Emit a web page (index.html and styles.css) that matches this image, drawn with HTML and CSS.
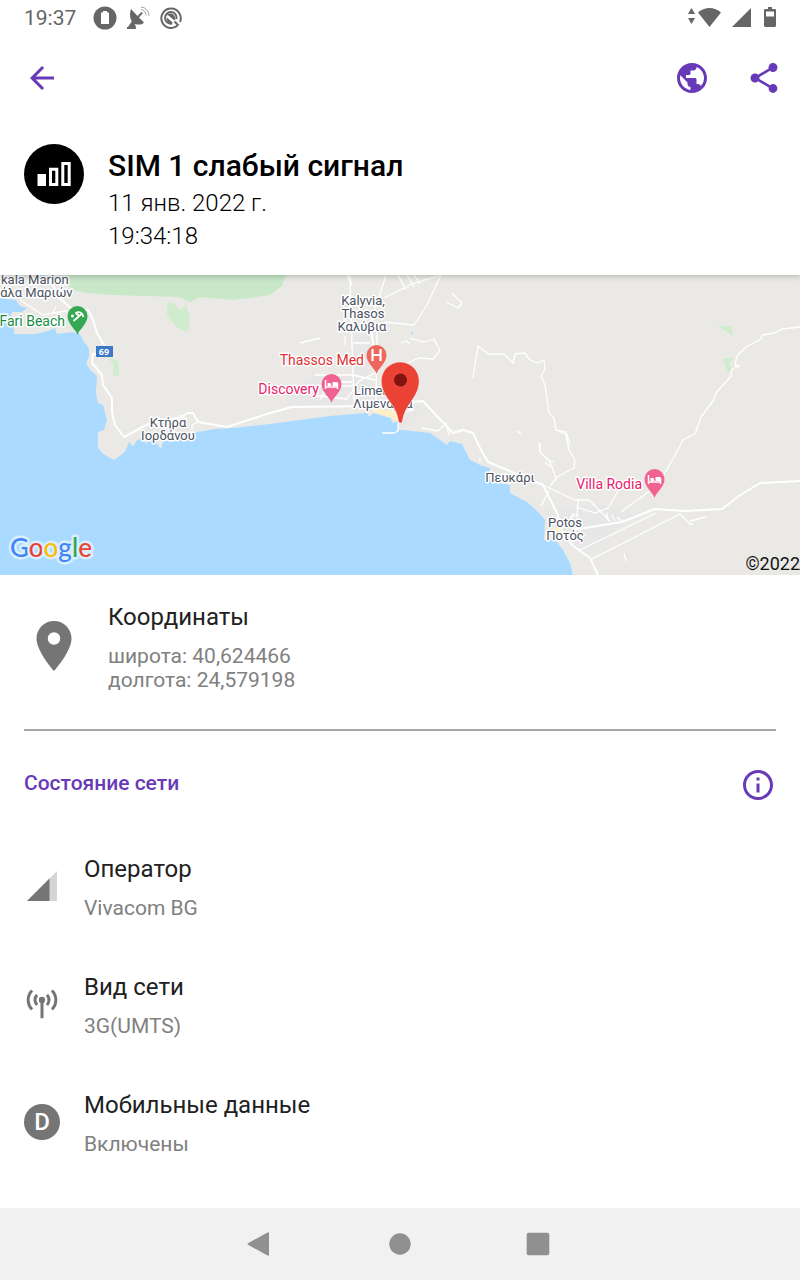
FILE: index.html
```html
<!DOCTYPE html>
<html lang="ru">
<head>
<meta charset="utf-8">
<meta name="viewport" content="width=device-width, initial-scale=1">
<title>SIM 1 слабый сигнал</title>
<link rel="stylesheet" href="styles.css">
</head>
<body>
<div class="status-bar">
  <time class="clock">19:37</time>
  <svg class="status-icon" viewBox="0 0 24 24"><path fill-rule="evenodd" d="M12 .5a11.5 11.5 0 1 0 0 23 11.5 11.5 0 0 0 0-23zM10 5h4v1.500h2V18H8V6.500h2z"/></svg>
  <svg class="status-icon" viewBox="0 0 24 24"><path d="M5 3C3 8 4 16 9 18c3 1 7 1 9-1.500l-5-5 4-4.500-1.500-1-4 4zM6 15l-4 6H1v2h9c0-3-1-5-2-6z"/><path class="thin" d="M15 3.500a6 6 0 0 1 5 6M15 1a8.500 8.500 0 0 1 8 9"/></svg>
  <svg class="status-icon" viewBox="0 0 24 24"><path class="ring" d="M18.500 19.500A9.700 9.700 0 1 1 21 16"/><path class="ring" d="M13 17.500A5.800 5.800 0 1 1 17.500 13"/><path d="M8 9c3-3 8-1 8.500 4l-1 1.500-6-5zM8 11.500l6 5.500c-4 1-7-2-6-5.500z"/><path class="ring" d="M15.500 15.500l4 4"/></svg>
  <span class="spacer"></span>
  <svg class="wifi" viewBox="0 0 34 24"><path d="M1 8l3.500-6L8 8zM1 12l3.500 6L8 12zM11 6.500c6.500-6 16.500-6 23 0L22.500 21z"/></svg>
  <svg class="status-icon" viewBox="0 0 24 24"><path d="M2 21L21 2v19z"/></svg>
  <svg class="battery" viewBox="0 0 14 24"><path fill-rule="evenodd" d="M5 1h4v2h3.500L13 4v16l-1 1H2l-1-1V4l.5-1H5zM3 5.500v5h8v-5z"/></svg>
</div>

<header class="header">
  <nav class="toolbar">
    <button class="icon-button" aria-label="Назад"><svg class="icon" viewBox="0 0 24 24"><path d="M20 11H7.830l5.590-5.590L12 4l-8 8 8 8 1.410-1.410L7.830 13H20v-2z"/></svg></button>
    <span class="spacer"></span>
    <button class="icon-button" aria-label="Открыть в браузере"><svg class="icon" viewBox="0 0 24 24"><path d="M12 2C6.480 2 2 6.480 2 12s4.480 10 10 10 10-4.480 10-10S17.520 2 12 2zm-1 17.930c-3.950-.49-7-3.850-7-7.930 0-.62.08-1.210.21-1.790L9 15v1c0 1.100.9 2 2 2v1.930zm6.900-2.540c-.26-.81-1-1.390-1.900-1.390h-1v-3c0-.55-.45-1-1-1H8v-2h2c.55 0 1-.45 1-1V7h2c1.100 0 2-.9 2-2v-.41c2.930 1.190 5 4.060 5 7.410 0 2.080-.8 3.970-2.100 5.390z"/></svg></button>
    <button class="icon-button" aria-label="Поделиться"><svg class="icon" viewBox="0 0 24 24"><path d="M18 16.080c-.76 0-1.440.3-1.960.77L8.910 12.700c.05-.23.09-.46.09-.7s-.04-.47-.09-.7l7.050-4.110c.54.5 1.250.81 2.040.81 1.660 0 3-1.340 3-3s-1.340-3-3-3-3 1.340-3 3c0 .24.04.47.09.7L8.040 9.810C7.500 9.310 6.790 9 6 9c-1.660 0-3 1.340-3 3s1.340 3 3 3c.79 0 1.500-.31 2.040-.81l7.120 4.160c-.05.21-.08.43-.08.65 0 1.610 1.310 2.920 2.920 2.920 1.610 0 2.920-1.310 2.920-2.920s-1.310-2.920-2.920-2.920z"/></svg></button>
  </nav>
  <div class="event">
    <svg class="event-icon" viewBox="0 0 60 60"><circle cx="30" cy="30" r="30"/><path fill="#fff" d="M13.500 30H22v12h-8.500z"/><path fill="none" stroke="#fff" stroke-width="3" d="M26.500 25.300h6.300v15.200h-6.300zM38.800 19.500h6.400v21h-6.400z"/></svg>
    <div>
      <h1 class="event-title">SIM 1 слабый сигнал</h1>
      <p class="event-date">11 янв. 2022 г.<br>19:34:18</p>
    </div>
  </div>
</header>

<main class="content">
  <svg class="map" viewBox="0 275 800 300" preserveAspectRatio="xMidYMid slice" role="img" aria-label="Карта">
    <path fill="#c8e8c8" d="M62 275L72 290 87 293 113 295 180 297 190 302 200 297 233 300 270 295 282 286 286 275z"/>
    <path fill="#cfeccd" d="M167 303l5-1 9 9 5-7 4 14-2 14-10-4-11-12zM108 357l10 4 1 15-6-1 1-9zM718 326h13l2 10zM723 359l11-2-5 7 3 5-4 3z"/>
    <path fill="#e7e7e8" d="M353 334h17v72h-17zM315 375h38v30h-65l-2-8zM545 508l60-3 30 10-50 40-25-15zM404 405h15l-5 18-14 6z"/>
    <path fill="#aadaff" d="M0 298L16 300 20 306 27 308 22 312 12 312 10 318 14 324 14 334 36 334 48 331 55 328 57 334 72 332 80 334 84 342 89 348 89 357 86 363 90 370 97 376 96 393 98 403 103 405 107 420 104 430 98 432 98 448 103 454 114 460 125 452 129 442 133 447 137 440 142 438 146 444 150 436 155 441 161 449 163 440 172 442 178 436 185 440 192 433 215 429 233 428 270 424 330 416 367 413 369 417 373 413 390 418 393 423 398 421 398 430 403 430 430 433 447 445 450 441 462 444 470 460 480 465 490 468 488 478 493 482 510 485 510 493 527 502 538 512 545 520 544 540 555 540 563 550 570 563 573 575 0 575zM34 275h10l6 9-8 2zM410 334l3-3-1 4z"/>
    <path fill="#fff0c5" d="M373 408l20 3 6 7-1 4-7-5-18-5zM553 527l8 1 1 5-8-2z"/>
    <g class="road">
      <path d="M20 300L43 315 53 313 67 311M53 313l3-6M300 343l20-5M345 336v9M350 275l2 70 2 57M386 275l-7 22-9 28M384 298l28-14 29-9M398 275l8 15M407 275l7 12M414 275l6 9M441 275l-14 30-13 20-30-3M446 302l12 6 4-5-10-10M353 343h17M377 325l-1 80M353 375l22 5M315 375h38M319 386h34M312 395l35 4 12-18 18-9M320 400l10-18h22M401 343l5-2 4 3M410 338l14 4 10-3 6 12-7 8-14-1-19 8"/>
      <path d="M473 378l3-20 2-12 10 8 16 0 9 9 2-9 10-1 5 7 8 3 6-3 1 9-4 7 4 9 4 28 5 5 2 12 10 2 4 12M539 443l1 9 11 10 3-1M545 462l5 5M557 430l9 5 3 15 6 10-1 8-17 9-7 9M540 443l0 9 10 10 6 16M800 327l-18 2-7 4-13 2-1 4-15 8-9 9-2 9 5 1-8 3-1 7-15 17-3 8-12 16-6 17-12 6-8 15-17 30-37 27M620 488l-12 20-13 5-19-6M543 485l32 15h14l12 12 10 10M541 506l8-15M578 500l-1 18M570 518l8-4M580 550l76-37M592 559l88-45 10 10 3 0M690 521l16-4M607 513l1 8M612 515l3 6M617 517l5 4M624 553l2 8M570 519l4-6"/>
      <path d="M521 434l-4-3M422 428l16 3 8-8 3 12M398 422v9l-4 2h-12M399 412l15-2M180 415l7 4M198 422l-6 3v5M480 458v4"/>
    </g>
    <g class="road main-road">
      <path d="M49 275L58 297 72 309 88 310 92 317 97 333 105 347 104 353 93 354 92 363 102 375 103 385 112 398 112 413 115 425 124 437 150 423 182 417 187 413 193 413 198 422 227 427 270 413 292 407 370 406 423 401 433 412 453 433 463 430 473 433 480 448 488 462 543 485 557 513 563 533 572 545 590 558 598 575"/>
      <path d="M347 275l5 10M370 325l4 24M572 530l50-8 33-13 30 2 37-2 17-13 21-13 40-2"/>
    </g>
    <g class="labels">
      <text x="1" y="284">kala Marion</text><text x="-7" y="297">κάλα Μαριών</text>
      <g text-anchor="middle"><text x="363" y="305">Kalyvia,</text><text x="363" y="318">Thasos</text><text x="362" y="331">Καλύβια</text>
      <text x="168" y="427">Κτήρα</text><text x="168" y="440">Ιορδάνου</text><text x="510" y="482">Πευκάρι</text><text x="565" y="527">Potos</text><text x="565" y="540">Ποτός</text></g>
      <text x="354" y="395">Limenaria</text><text x="353" y="408">Λιμενάρια</text>
      <g class="poi" text-anchor="end"><text fill="#188e45" x="65" y="326">Fari Beach</text><text fill="#e02f32" x="364" y="365">Thassos Med</text><text fill="#e9216c" x="319" y="394">Discovery</text><text fill="#e9216c" x="642" y="489">Villa Rodia</text></g>
    </g>
    <rect x="96" y="346" width="17" height="11" fill="#3a78c8"/><text class="shield" x="104" y="355" text-anchor="middle">69</text>
    <defs><path id="pin" d="M0 0C-1-5-10-11-10-19a10 10 0 1 1 20 0C10-11 1-5 0 0z"/><path id="bed" d="M-6-23v9M-6-16H6M6-14v-6" fill="none" stroke="#fff" stroke-width="1.500"/></defs>
    <g transform="translate(77.500 335)"><use href="#pin" fill="#34a853"/><path fill="none" stroke="#fff" stroke-width="1.800" d="M-4-14l8-7M-2-22q6-3 8 4M-2-22l4 3"/><circle cx="-5" cy="-19" r="1.500" fill="#fff"/></g>
    <g transform="translate(376.500 374)"><use href="#pin" fill="#ee675c"/><path fill="none" stroke="#fff" stroke-width="2.200" d="M-4-25v12M4-25v12M-4-19h8"/></g>
    <g transform="translate(331.500 403)"><use href="#pin" fill="#f06292"/><use href="#bed"/><path fill="#fff" d="M-4-20h3l1 3h-4zM1-21h5v4H1z"/></g>
    <g transform="translate(654.500 498)"><use href="#pin" fill="#f06292"/><use href="#bed"/><path fill="#fff" d="M-4-20h3l1 3h-4zM1-21h5v4H1z"/></g>
    <path fill="#ea4335" stroke="#fff" stroke-opacity=".5" d="M400.500 423c-1.500 0-2-1-2.300-3-2-16-17-23-17-39a19 19 0 0 1 38 0c0 16-14 23-16.500 39-.3 2-.7 3-2.200 3z"/><circle cx="400.500" cy="380" r="6.500" fill="#811411"/>
    <text class="logo" x="10" y="557"><tspan fill="#4285f4">G</tspan><tspan fill="#ea4335">o</tspan><tspan fill="#fbbc05">o</tspan><tspan fill="#4285f4">g</tspan><tspan fill="#34a853">l</tspan><tspan fill="#ea4335">e</tspan></text>
    <text class="copyright" x="800" y="570" text-anchor="end">©2022</text>
  </svg>

  <section class="coordinates">
    <svg class="place-icon" viewBox="0 0 24 24"><path d="M12 2C8.130 2 5 5.130 5 9c0 5.250 7 13 7 13s7-7.750 7-13c0-3.870-3.130-7-7-7zm0 9.500a2.500 2.500 0 0 1 0-5 2.500 2.500 0 0 1 0 5z"/></svg>
    <div>
      <h2 class="item-title">Координаты</h2>
      <p class="item-text">широта: 40,624466<br>долгота: 24,579198</p>
    </div>
  </section>

  <section class="network">
    <div class="section-head">
      <h2 class="section-title">Состояние сети</h2>
      <button class="icon-button" aria-label="Информация"><svg class="icon" viewBox="0 0 24 24"><path d="M11 17h2v-6h-2v6zm1-15C6.480 2 2 6.480 2 12s4.480 10 10 10 10-4.480 10-10S17.520 2 12 2zm0 18c-4.410 0-8-3.590-8-8s3.590-8 8-8 8 3.590 8 8-3.590 8-8 8zM11 9h2V7h-2v2z"/></svg></button>
    </div>
    <ul class="items">
      <li class="item">
        <svg class="icon" viewBox="0 0 24 24"><path fill-opacity=".3" d="M2 22h20V2z"/><path d="M17 7L2 22h15z"/></svg>
        <div><h3 class="item-title">Оператор</h3><p class="item-text">Vivacom BG</p></div>
      </li>
      <li class="item">
        <svg class="icon" viewBox="0 0 24 24"><circle cx="12" cy="9.300" r="2.100"/><path fill="none" stroke="currentColor" stroke-width="2" d="M12 10v11.500M8.700 5.900a4.900 4.900 0 0 0 0 6.800M15.300 5.900a4.900 4.900 0 0 1 0 6.800M5.400 3a8.900 8.900 0 0 0 0 12.600M18.600 3a8.900 8.900 0 0 1 0 12.600"/></svg>
        <div><h3 class="item-title">Вид сети</h3><p class="item-text">3G(UMTS)</p></div>
      </li>
      <li class="item">
        <span class="badge">D</span>
        <div><h3 class="item-title">Мобильные данные</h3><p class="item-text">Включены</p></div>
      </li>
    </ul>
  </section>
</main>

<nav class="nav-bar">
  <button class="nav-button" aria-label="Назад"><svg class="icon" viewBox="0 0 36 36"><path d="M4 17.300L24 6.200l1 .6v22.400l-1 .6L4 18.700q-1-.7 0-1.400z"/></svg></button>
  <button class="nav-button" aria-label="Домой"><svg class="icon" viewBox="0 0 36 36"><circle cx="18" cy="18" r="10.700"/></svg></button>
  <button class="nav-button" aria-label="Недавние"><svg class="icon" viewBox="0 0 36 36"><rect x="6.700" y="6.700" width="22.600" height="22.600" rx="2"/></svg></button>
</nav>
</body>
</html>
```
FILE: styles.css
```css
* {
  box-sizing: border-box;
}

body {
  margin: 0;
  min-height: 100vh;
  display: flex;
  flex-direction: column;
  background: #fff;
  color: #212121;
  font-family: Roboto, "Noto Sans", sans-serif;
}

h1, h2, h3, p, ul {
  margin: 0;
  padding: 0;
  font-weight: 400;
  list-style: none;
}

button {
  border: 0;
  padding: 0;
  background: none;
  color: inherit;
  cursor: pointer;
}

svg {
  display: block;
  flex: none;
  fill: currentColor;
}

.spacer {
  flex: 1;
}

.icon {
  width: 36px;
  height: 36px;
}

.status-bar {
  display: flex;
  align-items: center;
  gap: 9px;
  height: 36px;
  padding: 0 23px 0 24px;
  color: #666;
}

.clock {
  margin-right: 8px;
  font-size: 21px;
  line-height: 36px;
}

.status-icon {
  width: 24px;
  height: 24px;
}

.thin, .ring {
  fill: none;
  stroke: currentColor;
  stroke-width: 1;
}

.thin {
  opacity: 0.6;
}

.ring {
  stroke-width: 2;
}

.wifi {
  width: 34px;
  height: 24px;
}

.battery {
  width: 14px;
  height: 24px;
}

.header {
  position: relative;
  z-index: 1;
  background: #fff;
  box-shadow: 0 1px 6px rgba(0, 0, 0, 0.25);
  clip-path: inset(0 0 -16px 0);
}

.toolbar {
  display: flex;
  align-items: center;
  gap: 24px;
  height: 84px;
  padding: 0 12px 0 18px;
  color: #673ab7;
}

.icon-button {
  display: grid;
  place-items: center;
  width: 48px;
  height: 48px;
}

.event {
  display: flex;
  gap: 24px;
  padding: 24px 24px 22px;
  color: #000;
}

.event-icon {
  width: 60px;
  height: 60px;
}

.event-title {
  padding-top: 4px;
  margin-bottom: 3px;
  font-size: 30px;
  font-weight: 500;
  line-height: 36px;
}

.event-date {
  font-size: 24px;
  font-weight: 300;
  line-height: 33px;
}

.content {
  flex: 1;
}

.map {
  width: 100%;
  height: 300px;
  background: #eae9e6;
}

.road {
  fill: none;
  stroke: #fff;
  stroke-width: 1.3;
  stroke-linejoin: round;
}

.main-road {
  stroke-width: 2;
}

.labels {
  fill: #4b535f;
  stroke: #fff;
  stroke-width: 3px;
  stroke-linejoin: round;
  paint-order: stroke;
  font-size: 13px;
}

.poi {
  font-size: 14px;
}

.shield {
  fill: #fff;
  font: bold 9px "Noto Sans", sans-serif;
}

.logo {
  font: 26px Lato, sans-serif;
  font-weight: 500;
  stroke: #d9eeff;
  stroke-width: 5px;
  stroke-linejoin: round;
  paint-order: stroke;
}

.copyright {
  fill: #111;
  font-size: 18px;
}

.coordinates {
  display: flex;
  align-items: flex-start;
  gap: 24px;
  margin: 0 24px;
  padding: 28px 0 37px;
  border-bottom: 2px solid #a6a6a6;
}

.place-icon {
  width: 60px;
  height: 60px;
  margin-top: 13px;
  color: #757575;
}

.item-title {
  margin-bottom: 13px;
  font-size: 24px;
  line-height: 28px;
}

.item-text {
  color: #808080;
  font-size: 21px;
  line-height: 24px;
}

.section-head {
  display: flex;
  align-items: flex-start;
  justify-content: space-between;
  padding: 30px 18px 20px 24px;
  color: #673ab7;
}

.section-title {
  margin-top: 10px;
  font-size: 21px;
  font-weight: 500;
  line-height: 24px;
}

.item {
  display: flex;
  align-items: flex-start;
  gap: 24px;
  padding: 26px 24px 27px;
  color: #757575;
}

.item .icon, .badge {
  margin-top: 13px;
}

.item .item-title {
  color: #212121;
}

.badge {
  width: 36px;
  height: 36px;
  border-radius: 50%;
  background: #757575;
  color: #fff;
  font-size: 24px;
  font-weight: 500;
  line-height: 36px;
  text-align: center;
}

.nav-bar {
  display: flex;
  align-items: center;
  justify-content: center;
  gap: 66px;
  height: 72px;
  background: #f1f1f1;
  color: #909090;
}

.nav-button {
  display: grid;
  place-items: center;
  width: 72px;
  height: 72px;
}
```
